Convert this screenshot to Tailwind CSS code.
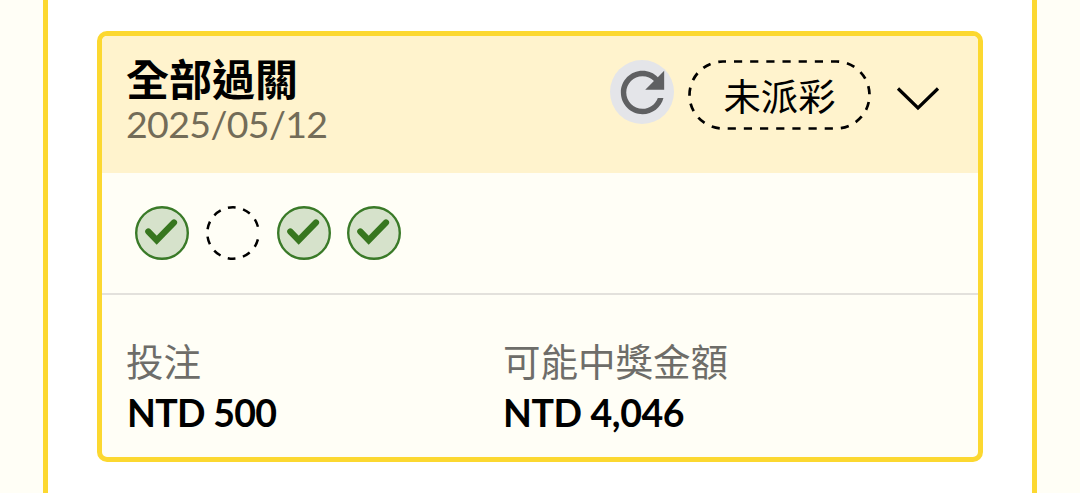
<!DOCTYPE html>
<html lang="zh-Hant">
<head>
    <meta charset="UTF-8">
    <meta name="viewport" content="width=device-width, initial-scale=1.0">
    <title>投注紀錄</title>
    <script src="https://cdn.jsdelivr.net/npm/@tailwindcss/browser@4"></script>
</head>
<body class="h-screen overflow-hidden bg-[#fffef6] font-['Lato','Noto_Sans_CJK_TC',sans-serif] text-black">
    <main class="ml-[43px] h-full w-[994px] border-x-5 border-[#fcd830] bg-white px-[49px] pt-[31px]">
        <section class="h-[431px] overflow-hidden rounded-[10px] border-5 border-[#fcd830] bg-[#fffef6]">
            <!-- 標題列 -->
            <header class="flex h-[137px] items-start bg-[#fff3cd] pl-[25px]">
                <div class="w-[483px] pt-[22px]">
                    <h1 class="-ml-px text-[43px] leading-[44px] font-bold">全部過關</h1>
                    <p class="-ml-px text-[37.5px] leading-[44px] tracking-[-0.65px] text-[#736c58]">2025/05/12</p>
                </div>
                <button class="mt-6 flex size-16 items-center justify-center rounded-full bg-[#e4e5e9]">
                    <svg class="size-[65px] shrink-0" viewBox="0 0 24 24" fill="#5f6062">
                        <path d="M17.65 6.35C16.2 4.9 14.21 4 12 4c-4.42 0-7.99 3.58-7.99 8s3.57 8 7.99 8c3.73 0 6.84-2.55 7.73-6h-2.08c-.82 2.33-3.04 4-5.65 4-3.31 0-6-2.69-6-6s2.69-6 6-6c1.66 0 3.14.69 4.22 1.78L13 11h7V4l-2.35 2.35z"/>
                    </svg>
                </button>
                <div class="relative mt-6 ml-[14px] flex h-[70px] w-[183px] items-center justify-center">
                    <svg class="absolute inset-0" width="183" height="70" fill="none" stroke="#000" stroke-width="2.7">
                        <rect x="1.5" y="1.5" width="180" height="67" rx="33.5" stroke-dasharray="8.2 7.97" stroke-dashoffset="5.2"/>
                    </svg>
                    <span class="pt-[3px] text-[37.3px] leading-none">未派彩</span>
                </div>
                <button class="mt-[48px] ml-[25px]">
                    <svg width="44" height="30" viewBox="0 0 44 30" fill="none" stroke="#000" stroke-width="3.2">
                        <path d="M2 4.5 22 24 42 4.5"/>
                    </svg>
                </button>
            </header>

            <!-- 各關結果 -->
            <div class="flex h-[122px] items-center gap-[16.8px] border-b-2 border-[#e3e1dc] pl-[33px]">
                <svg width="54" height="54" fill="none">
                    <circle cx="27" cy="27" r="25.8" fill="#d6e2cb" stroke="#3a7a28" stroke-width="2.4"/>
                    <path d="M13.3 25.5 21.7 34.2 39 16.5" stroke="#37761f" stroke-width="6.2" stroke-linecap="round"/>
                </svg>
                <svg width="54" height="54" fill="none">
                    <circle cx="27" cy="27" r="25.7" pathLength="360" stroke="#000" stroke-width="2.5" stroke-dasharray="17.8 17" stroke-dashoffset="-14.7"/>
                </svg>
                <svg width="54" height="54" fill="none">
                    <circle cx="27" cy="27" r="25.8" fill="#d6e2cb" stroke="#3a7a28" stroke-width="2.4"/>
                    <path d="M13.3 25.5 21.7 34.2 39 16.5" stroke="#37761f" stroke-width="6.2" stroke-linecap="round"/>
                </svg>
                <svg width="54" height="54" fill="none">
                    <circle cx="27" cy="27" r="25.8" fill="#d6e2cb" stroke="#3a7a28" stroke-width="2.4"/>
                    <path d="M13.3 25.5 21.7 34.2 39 16.5" stroke="#37761f" stroke-width="6.2" stroke-linecap="round"/>
                </svg>
            </div>

            <!-- 金額 -->
            <dl class="flex pt-[42px] pl-[25px] text-[37.5px]">
                <div class="w-[376px]">
                    <dt class="-ml-px leading-[50px] text-[#6e6d69]">投注</dt>
                    <dd class="leading-[52px] font-bold tracking-[-0.7px]">NTD 500</dd>
                </div>
                <div>
                    <dt class="leading-[50px] text-[#6e6d69]">可能中獎金額</dt>
                    <dd class="leading-[52px] font-bold tracking-[-0.4px]">NTD 4,046</dd>
                </div>
            </dl>
        </section>
    </main>
</body>
</html>
